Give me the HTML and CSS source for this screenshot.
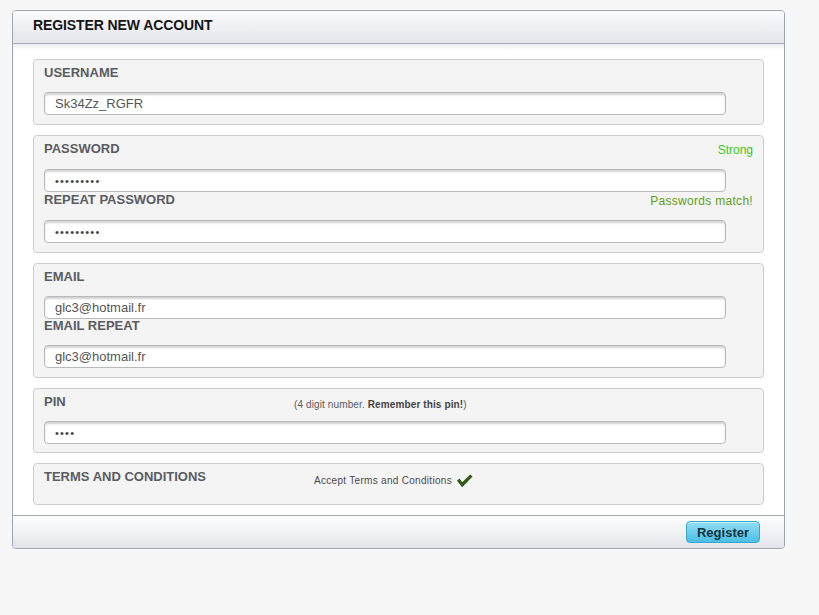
FILE: index.html
```html
<!DOCTYPE html>
<html lang="en">
<head>
<meta charset="utf-8">
<title>Register new account</title>
<link rel="stylesheet" href="styles.css">
</head>
<body>
<div class="page">
  <div class="panel">
    <div class="panel-head">
      <h1 class="title">REGISTER NEW ACCOUNT</h1>
    </div>
    <div class="panel-body">
      <div class="group">
        <div class="row"><span class="label">USERNAME</span></div>
        <input class="field" type="text" value="Sk34Zz_RGFR" readonly>
      </div>

      <div class="group">
        <div class="row row-msg"><span class="label">PASSWORD</span><span class="msg msg-strong">Strong</span></div>
        <input class="field field-dots" type="text" value="•••••••••" readonly>
        <div class="row row-msg row-next row-next-wide"><span class="label">REPEAT PASSWORD</span><span class="msg msg-match">Passwords match!</span></div>
        <input class="field field-dots" type="text" value="•••••••••" readonly>
      </div>

      <div class="group">
        <div class="row"><span class="label">EMAIL</span></div>
        <input class="field" type="text" value="glc3@hotmail.fr" readonly>
        <div class="row row-next"><span class="label">EMAIL REPEAT</span></div>
        <input class="field" type="text" value="glc3@hotmail.fr" readonly>
      </div>

      <div class="group group-pin">
        <div class="row row-pin"><span class="label">PIN</span><span class="hint">(4 digit number. <b>Remember this pin!</b>)</span></div>
        <input class="field field-dots" type="text" value="••••" readonly>
      </div>

      <div class="group group-terms">
        <div class="row row-terms">
          <span class="label">TERMS AND CONDITIONS</span>
          <span class="accept">Accept Terms and Conditions
            <svg class="check" width="16" height="14" viewBox="0 0 16 14" aria-hidden="true">
              <polygon points="0,6.8 2.4,4.6 5.2,8.2 13.2,0.4 15.6,2.6 5.2,13.2" fill="#2f5a12"/>
            </svg>
          </span>
        </div>
      </div>
    </div>
    <div class="panel-foot">
      <button class="btn" type="button">Register</button>
    </div>
  </div>
</div>
</body>
</html>
```
FILE: styles.css
```css
* { box-sizing: border-box; }

html, body {
  margin: 0;
  background: #f7f7f7;
  font-family: "Liberation Sans", Arial, sans-serif;
}

.page {
  padding: 10px 0 0 12px;
}

.panel {
  width: 773px;
  border: 1px solid #9fa3b3;
  border-radius: 4px;
  background: #fff;
  overflow: hidden;
}

.panel-head {
  height: 33px;
  padding: 6px 20px 0 20px;
  border-bottom: 1px solid #a6a9b7;
  background: linear-gradient(#fcfcfd, #e3e5eb);
}

.title {
  margin: 0;
  font-size: 14px;
  line-height: 16px;
  font-weight: bold;
  letter-spacing: -0.1px;
  color: #151515;
}

.panel-body {
  display: flex;
  flex-direction: column;
  gap: 10px;
  padding: 15px 20px 10px 20px;
  background: linear-gradient(#ebebeb, #ffffff 6px);
}

.group {
  display: flex;
  flex-direction: column;
  align-items: flex-start;
  padding: 7px 10px 9px 10px;
  border: 1px solid #cdcdcd;
  border-radius: 4px;
  background: #f4f4f4;
}

.group-pin { padding-bottom: 8px; }
.group-terms { padding-bottom: 21px; }

.row {
  display: flex;
  justify-content: space-between;
  align-items: flex-start;
  align-self: stretch;
  height: 12px;
  margin-bottom: 13px;
}

.row-msg { height: 13px; }
.row-next { margin-top: 1px; }
.row-next-wide { margin-top: 2px; }

.row-pin, .row-terms {
  display: grid;
  justify-content: start;
}
.row-pin { grid-template-columns: 250px auto; }
.row-terms { grid-template-columns: 270px auto; margin-bottom: 0; }

.label {
  font-size: 13px;
  line-height: 12px;
  font-weight: bold;
  color: #5a5c62;
  white-space: nowrap;
}

.msg {
  font-size: 12px;
  line-height: 15px;
  white-space: nowrap;
}
.msg-strong { color: #3cc81e; }
.msg-match { color: #5f9e18; letter-spacing: 0.3px; }

.hint {
  margin-top: 3px;
  font-size: 10px;
  line-height: 12px;
  letter-spacing: 0.12px;
  color: #5a5a5a;
  white-space: nowrap;
}
.hint b { color: #444; }

.accept {
  display: inline-flex;
  align-items: center;
  gap: 5px;
  margin-top: 3px;
  font-size: 10px;
  line-height: 14px;
  letter-spacing: 0.3px;
  color: #4a4a4a;
  white-space: nowrap;
}

.check { display: block; }

.field {
  display: block;
  width: 682px;
  height: 23px;
  margin: 0;
  padding: 0 10px;
  border: 1px solid #b9b9b9;
  border-radius: 4px;
  background: #fff;
  box-shadow: inset 0 2px 2px rgba(0, 0, 0, 0.18);
  font-family: "Liberation Sans", Arial, sans-serif;
  font-size: 13px;
  color: #555;
  outline: none;
}

.field-dots {
  font-size: 11px;
  letter-spacing: 1.2px;
  color: #444;
}

.panel-foot {
  display: flex;
  justify-content: flex-end;
  height: 33px;
  padding: 5px 24px 0 0;
  border-top: 1px solid #a6a9b7;
  background: linear-gradient(#ffffff, #e2e4ea);
}

.btn {
  width: 74px;
  height: 22px;
  padding: 0;
  border: 1px solid #39a6ca;
  border-radius: 4px;
  background: linear-gradient(#93def5, #4bbee3);
  box-shadow: inset 0 1px 0 rgba(255, 255, 255, 0.5);
  font-family: "Liberation Sans", Arial, sans-serif;
  font-size: 13px;
  font-weight: bold;
  color: #12323f;
  cursor: pointer;
}
```
